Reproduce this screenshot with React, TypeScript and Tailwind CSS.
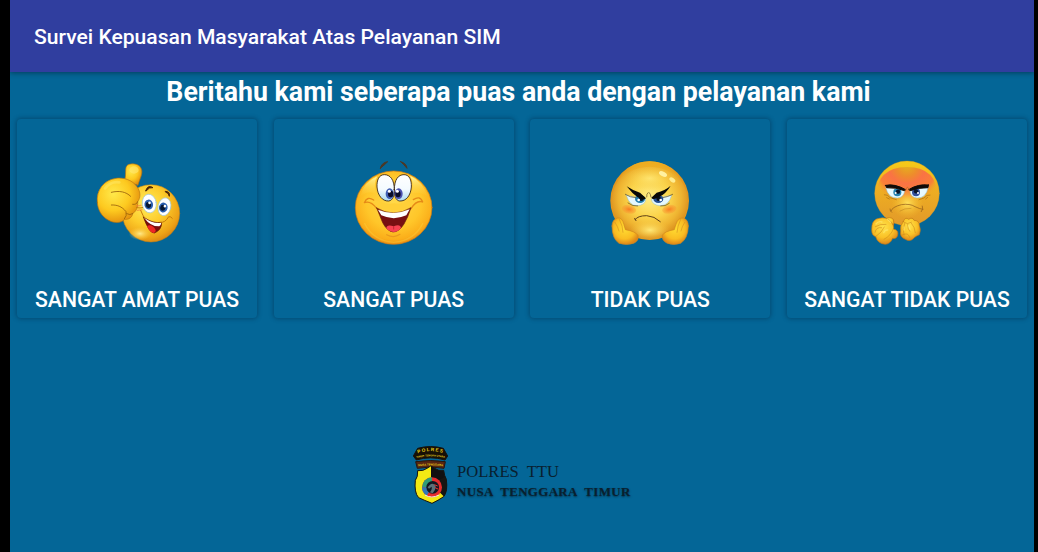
import React from 'react';

function ThumbFace() {
  return (
    <svg className="h-[95px] w-[100px]" viewBox="-9 0 300 285" fill="none" strokeLinecap="round">
      <defs>
        <radialGradient id="a1" cx="42%" cy="35%" r="68%">
          <stop offset="0" stopColor="#ffed5c" />
          <stop offset=".5" stopColor="#fdcb2a" />
          <stop offset=".85" stopColor="#eda216" />
          <stop offset="1" stopColor="#d98512" />
        </radialGradient>
        <radialGradient id="a2" cx="38%" cy="35%" r="70%">
          <stop offset="0" stopColor="#ffe94a" />
          <stop offset=".55" stopColor="#fdc91f" />
          <stop offset="1" stopColor="#e28b0c" />
        </radialGradient>
        <radialGradient id="a3" cx="50%" cy="50%" r="50%">
          <stop offset="0" stopColor="#ffe98a" />
          <stop offset="1" stopColor="#ffd040" stopOpacity="0" />
        </radialGradient>
      </defs>
      <circle cx="183" cy="175" r="86" fill="url(#a1)" stroke="#c98010" strokeWidth="1.5" />
      <ellipse cx="150" cy="236" rx="34" ry="20" fill="url(#a3)" />
      <path d="M103 78C110 62 104 42 110 33C116 24 142 24 151 36C162 52 151 66 144 90Z" fill="url(#a2)" stroke="#b87410" strokeWidth="2" />
      <ellipse cx="132" cy="45" rx="14" ry="11" fill="#ffe66a" opacity=".7" />
      <path d="M22 142C18 105 42 75 78 70C100 66 128 76 140 94C154 112 151 130 143 140C145 156 138 169 128 176C126 188 116 194 104 193C96 204 74 206 56 196C34 184 23 164 22 142Z" fill="url(#a2)" stroke="#b87410" strokeWidth="2" />
      <path d="M64 112C88 106 108 110 122 124M64 150C80 149 96 154 108 170Q112 182 103 192M128 148Q140 150 143 140M110 176Q120 182 128 176" stroke="#99600c" strokeWidth="2.5" />
      <path d="M45 100Q62 78 88 82" stroke="#fff07a" strokeWidth="8" opacity=".4" />
      <g transform="rotate(-8 175 147)">
        <ellipse cx="178" cy="146" rx="21" ry="28" fill="#fff" stroke="#9cc4d6" strokeWidth="2" />
        <ellipse cx="176" cy="149" rx="13" ry="15" fill="#2a5fb0" />
        <ellipse cx="175" cy="150" rx="8" ry="9" fill="#071733" />
        <circle cx="179" cy="144" r="4" fill="#fff" />
      </g>
      <g transform="rotate(12 222 157)">
        <ellipse cx="223" cy="155" rx="19" ry="27" fill="#fff" stroke="#9cc4d6" strokeWidth="2" />
        <ellipse cx="220" cy="158" rx="13" ry="15" fill="#2a5fb0" />
        <ellipse cx="219" cy="159" rx="8" ry="9" fill="#071733" />
        <circle cx="224" cy="153" r="4" fill="#fff" />
      </g>
      <path d="M167 107Q174 88 189 98Q178 95 169 107ZM227 109Q241 110 238 124Q237 114 227 111Z" fill="#4a2505" stroke="#4a2505" strokeWidth="3" />
      <path d="M160 186Q189 207 215 202Q215 226 193 234Q178 236 160 186Z" fill="#7b0d0d" stroke="#5b1505" strokeWidth="2" />
      <path d="M162 188Q189 207 214 203Q213 210 208 214Q182 215 162 188Z" fill="#fff" />
      <path d="M171 213Q186 206 197 225Q198 232 190 234Q179 232 171 213Z" fill="#ed2724" />
      <path d="M140 158Q151 160 158 158M152 166Q158 182 166 192M210 202Q225 205 236 185Q243 184 247 190" stroke="#c67b0a" strokeWidth="3" />
      <path d="M140 153L153 151M142 166L156 164" stroke="#f07840" strokeWidth="4" opacity=".6" />
    </svg>
  );
}

function HappyFace() {
  return (
    <svg className="h-[95px] w-[100px]" viewBox="-4 0 300 285" fill="none" strokeLinecap="round">
      <defs>
        <radialGradient id="b1" cx="50%" cy="42%" r="60%">
          <stop offset="0" stopColor="#ffd94a" />
          <stop offset=".6" stopColor="#ffc629" />
          <stop offset=".86" stopColor="#fbae1a" />
          <stop offset="1" stopColor="#e88710" />
        </radialGradient>
        <linearGradient id="b2" x1="0" x2="0" y1="0" y2="1">
          <stop offset="0" stopColor="#fff7a0" />
          <stop offset="1" stopColor="#ffd43c" stopOpacity="0" />
        </linearGradient>
        <linearGradient id="b3" x1="0" x2="0" y1="0" y2="1">
          <stop offset="0" stopColor="#fff" />
          <stop offset=".55" stopColor="#f4fbff" />
          <stop offset="1" stopColor="#a9d9ef" />
        </linearGradient>
      </defs>
      <ellipse cx="145" cy="158" rx="115" ry="110" fill="url(#b1)" stroke="#d87b0d" strokeWidth="2" />
      <path d="M45 124Q55 80 96 64Q84 84 92 116Q72 104 45 124ZM194 62Q235 80 247 126Q222 108 199 116Q207 84 194 62Z" fill="url(#b2)" />
      <path d="M105 40Q108 23 127 20Q118 29 105 40ZM166 20Q184 25 185 40Q176 29 166 20Z" fill="#4b3826" stroke="#4b3826" strokeWidth="3" />
      <path d="M147 104C147 73 134 59 117 59C101 59 94 75 95 96C97 121 111 139 130 138C142 136 147 124 147 104Z" fill="url(#b3)" stroke="#2e1a10" strokeWidth="2.5" />
      <path d="M147 104C147 73 159 59 176 59C192 59 199 75 198 96C196 121 183 139 163 138C151 136 147 124 147 104Z" fill="url(#b3)" stroke="#2e1a10" strokeWidth="2.5" />
      <ellipse cx="133" cy="116" rx="12" ry="16" fill="#3f5fb4" />
      <ellipse cx="160" cy="116" rx="12" ry="16" fill="#4a50b0" />
      <ellipse cx="136" cy="117" rx="8" ry="10" fill="#090c29" />
      <ellipse cx="158" cy="117" rx="8" ry="10" fill="#090c29" />
      <circle cx="132" cy="109" r="4.5" fill="#fff" />
      <circle cx="156" cy="109" r="4.5" fill="#fff" />
      <path d="M61 139Q72 120 91 134Q119 150 147 145Q176 150 203 133Q224 119 232 139Q218 132 204 151Q190 166 146 165Q102 165 89 151Q75 132 61 139Z" fill="#ffcf38" />
      <path d="M57 143Q66 122 85 135M57 143Q75 136 94 160M232 141Q224 120 204 134M232 141Q214 134 197 161" stroke="#e68a17" strokeWidth="4" />
      <path d="M94 159Q145 190 197 158Q188 187 176 207Q161 231 143 231Q125 228 112 203Q104 183 94 159Z" fill="#781012" stroke="#6c220b" strokeWidth="2" />
      <path d="M98 164Q145 184 193 163L183 181Q145 198 108 181Z" fill="#fff" />
      <path d="M123 220Q124 207 145 214Q165 206 167 219Q157 231 144 231Q131 230 123 220Z" fill="#f64251" />
      <path d="M145 215V222" stroke="#ae1726" strokeWidth="2" />
      <path d="M124 239Q145 251 164 238" stroke="#e99a1c" strokeWidth="3.5" />
      <path d="M58 206Q84 258 145 262Q206 258 232 206" stroke="#fddb49" strokeWidth="4" opacity=".3" />
    </svg>
  );
}

function AnnoyedFace() {
  return (
    <svg className="h-[95px] w-[100px]" viewBox="-1 0 300 285" fill="none" strokeLinecap="round">
      <defs>
        <radialGradient id="c1" cx="50%" cy="45%" r="52%">
          <stop offset="0" stopColor="#ffed86" />
          <stop offset=".5" stopColor="#fbd44b" />
          <stop offset=".8" stopColor="#efb431" />
          <stop offset="1" stopColor="#dd9420" />
        </radialGradient>
        <radialGradient id="c2" cx="48%" cy="40%" r="60%">
          <stop offset="0" stopColor="#ffdc32" />
          <stop offset=".65" stopColor="#fabd22" />
          <stop offset="1" stopColor="#df8618" />
        </radialGradient>
        <radialGradient id="c3">
          <stop offset="0" stopColor="#f87c22" />
          <stop offset="1" stopColor="#f99a32" stopOpacity=".35" />
        </radialGradient>
        <radialGradient id="c5">
          <stop offset="0" stopColor="#ffe878" />
          <stop offset="1" stopColor="#f6c83e" stopOpacity="0" />
        </radialGradient>
        <linearGradient id="c4" x1="0" x2="0" y1="0" y2="1">
          <stop offset="0" stopColor="#f0b020" />
          <stop offset="1" stopColor="#e9a021" stopOpacity="0" />
        </linearGradient>
      </defs>
      <circle cx="148" cy="137" r="118" fill="#e2961f" />
      <ellipse cx="148" cy="139" rx="114" ry="113" fill="url(#c1)" />
      <path d="M40 95Q78 19 148 19Q219 20 257 95Q216 36 148 35Q79 36 40 95Z" fill="url(#c4)" />
      <ellipse cx="148" cy="70" rx="75" ry="36" fill="url(#c5)" opacity=".8" />
      <ellipse cx="188" cy="57" rx="13" ry="7" transform="rotate(29 188 57)" fill="#fff1a0" />
      <ellipse cx="216" cy="75" rx="10" ry="6" transform="rotate(35 216 75)" fill="#ffed90" />
      <ellipse cx="149" cy="225" rx="60" ry="31" fill="url(#c5)" />
      <ellipse cx="86" cy="163" rx="22" ry="13" transform="rotate(12 86 163)" fill="url(#c3)" />
      <ellipse cx="207" cy="163" rx="22" ry="13" transform="rotate(-12 207 163)" fill="url(#c3)" />
      <path d="M77 120Q93 125 136 132Q135 151 110 152Q88 153 79 123ZM214 121Q192 126 153 132Q156 151 180 152Q205 152 213 123Z" fill="#e5f8ff" stroke="#8fbccb" strokeWidth="1.5" />
      <ellipse cx="119" cy="132" rx="15" ry="12" fill="#247dac" />
      <ellipse cx="174" cy="132" rx="15" ry="12" fill="#254e91" />
      <circle cx="123" cy="131" r="7" fill="#07111d" />
      <circle cx="175" cy="131" r="7" fill="#07111d" />
      <circle cx="115" cy="135" r="4" fill="#fff" />
      <circle cx="181" cy="135" r="4" fill="#fff" />
      <path d="M79 94Q96 106 119 113L137 130Q131 138 112 127Q95 115 79 94ZM211 92Q194 107 169 113L153 128Q157 137 175 127Q198 115 211 92Z" fill="#090806" />
      <path d="M75 118Q90 128 106 128M217 118Q202 126 188 128M139 126Q138 117 143 113M152 126Q151 117 147 113M83 144Q96 155 112 153M207 145Q196 155 181 153" stroke="#59441d" strokeWidth="2" />
      <path d="M104 194Q112 182 139 182Q162 183 180 200M103 190L107 197" stroke="#604016" strokeWidth="3" />
      <g fill="url(#c2)" stroke="#d18a1c" strokeWidth="2">
        <path d="M35 213Q35 194 52 189Q66 187 71 209L75 224Q105 229 113 241Q117 257 100 265Q79 272 56 265Q35 251 35 213Z" />
        <path d="M264 213Q264 194 249 189Q233 187 226 210L222 224Q192 229 186 241Q184 257 201 265Q219 272 241 265Q263 251 264 213Z" />
      </g>
      <path d="M44 202Q53 216 56 228M57 193Q68 214 68 232M253 202Q244 216 242 228M241 193Q231 214 230 232" stroke="#d8941f" strokeWidth="2" />
    </svg>
  );
}

function AngryFace() {
  return (
    <svg className="h-[95px] w-[100px]" viewBox="-9 0 300 285" fill="none" strokeLinecap="round">
      <defs>
        <linearGradient id="d1" x1="0" x2="0" y1="0" y2="1">
          <stop offset="0" stopColor="#f6cb18" />
          <stop offset=".4" stopColor="#efb021" />
          <stop offset="1" stopColor="#e2992a" />
        </linearGradient>
        <radialGradient id="d2" gradientUnits="userSpaceOnUse" cx="141" cy="30" r="112">
          <stop offset="0" stopColor="#e3b41c" />
          <stop offset=".3" stopColor="#ee8c2c" />
          <stop offset=".5" stopColor="#fa7344" />
          <stop offset=".8" stopColor="#f98038" />
          <stop offset="1" stopColor="#f0a52a" stopOpacity="0" />
        </radialGradient>
        <radialGradient id="d3" cx="45%" cy="35%" r="65%">
          <stop offset="0" stopColor="#ffe34c" />
          <stop offset=".6" stopColor="#fac126" />
          <stop offset="1" stopColor="#dc861a" />
        </radialGradient>
        <radialGradient id="d4">
          <stop offset="0" stopColor="#ffe05a" />
          <stop offset="1" stopColor="#f4bd2b" stopOpacity="0" />
        </radialGradient>
      </defs>
      <circle cx="141" cy="115" r="97" fill="url(#d1)" stroke="#dc9823" strokeWidth="1" />
      <path d="M50 125Q48 38 141 36Q234 38 231 125Q208 144 141 144Q82 144 50 125Z" fill="url(#d2)" />
      <ellipse cx="142" cy="145" rx="48" ry="45" fill="url(#d4)" />
      <path d="M78 99Q112 100 134 109Q130 128 112 129Q84 129 78 99ZM204 98Q174 99 150 109Q152 127 171 129Q199 129 204 98Z" fill="#e7faff" stroke="#8fc3cf" strokeWidth="1.5" />
      <circle cx="112" cy="112" r="12" fill="#2683b2" />
      <circle cx="168" cy="112" r="12" fill="#304e9b" />
      <circle cx="114" cy="110" r="6.5" fill="#07152a" />
      <circle cx="168" cy="109" r="6.5" fill="#07152a" />
      <circle cx="107" cy="114" r="3" fill="#fff" />
      <circle cx="174" cy="114" r="3" fill="#fff" />
      <path d="M77 91L80 98Q106 96 134 107L137 104Q104 85 77 91ZM205 90L204 98Q176 97 150 107L146 104Q174 86 205 90Z" fill="#100b08" stroke="#100b08" strokeWidth="3" strokeLinejoin="round" />
      <path d="M135 107Q140 96 142 97Q144 95 149 107M73 119Q83 118 90 128L109 134M210 120Q200 118 192 129L177 134M80 128L88 132M203 127L197 132" stroke="#9d6418" strokeWidth="1.8" />
      <path d="M93 168Q96 156 124 149Q150 145 165 155Q179 162 189 163M90 162Q90 169 95 172M187 153Q191 162 184 170" stroke="#96601a" strokeWidth="2.2" />
      <path d="M120 168Q133 159 153 160" stroke="#bd821f" strokeWidth="1.6" />
      <g fill="url(#d3)" stroke="#be7717" strokeWidth="2">
        <path d="M77 191Q89 183 100 193Q105 206 98 215Q84 217 77 205Z" />
        <path d="M36 211Q39 193 57 190Q78 185 91 198Q104 214 100 222Q117 225 113 241Q109 253 98 250Q91 267 76 268Q53 266 47 245Q35 242 35 225Z" />
        <path d="M130 199Q136 184 146 193Q158 185 162 196Q178 196 178 211Q184 226 178 239Q169 243 164 247Q151 263 136 253Q118 246 122 228Q119 212 130 199Z" />
      </g>
      <path d="M46 215Q61 206 78 208M45 232Q48 215 65 218M48 244Q66 232 73 216M72 253Q94 241 100 222M134 205Q126 225 132 240M143 208Q143 223 149 229M154 204Q165 217 166 233M127 240Q145 230 149 247M132 202Q141 210 154 202" stroke="#cf8b1c" strokeWidth="1.8" />
      <path d="M48 207Q55 197 66 201M71 233Q75 224 83 225M132 216L132 225M146 212L150 223M82 193L92 202" stroke="#ffec77" strokeWidth="4" opacity=".6" />
    </svg>
  );
}

function Emblem() {
  return (
    <svg className="h-[70px] w-[60px] shrink-0" viewBox="0 0 180 210" fill="none">
      <defs>
        <path id="arc1" d="M30 43Q77 24 124 43" />
        <path id="arc2" d="M34 54Q77 44 120 54" />
        <path id="arc3" d="M36 79Q77 74 118 79" />
        <clipPath id="shield">
          <path d="M38 92Q55 94 66 85L77 78L89 85Q101 94 116 91Q118 108 124 118Q129 154 116 170Q100 181 81 190Q58 181 41 173Q27 158 31 121Q39 111 38 92Z" />
        </clipPath>
      </defs>
      <path d="M25 48L38 25Q77 14 115 25L128 48Q124 54 120 60Q77 47 34 60Z" fill="#171006" stroke="#16120b" strokeWidth="3" />
      <path d="M32 65Q77 58 121 65L117 85Q77 77 37 85Z" fill="#5a2611" stroke="#26170e" strokeWidth="3" />
      <g fill="#e8d21c" fontFamily="Liberation Sans, sans-serif" fontWeight="700" textAnchor="middle">
        <text fontSize="14" letterSpacing="3.5"><textPath href="#arc1" startOffset="50%">POLRES</textPath></text>
        <text fontSize="7.5"><textPath href="#arc2" startOffset="50%">TIMOR TENGAH UTARA</textPath></text>
        <text fontSize="8.5"><textPath href="#arc3" startOffset="50%">NUSA TENGGARA</textPath></text>
      </g>
      <g clipPath="url(#shield)">
        <path d="M25 75H130V195H25Z" fill="#111" />
        <path d="M25 75H78V132L45 178L25 165Z" fill="#f3e914" />
        <path d="M78 132L125 108V185H78Z" fill="#171612" />
        <path d="M25 195V168L58 156L81 168L103 156L119 172L80 195Z" fill="#f3e914" />
      </g>
      <path d="M38 92Q55 94 66 85L77 78L89 85Q101 94 116 91Q118 108 124 118Q129 154 116 170Q100 181 81 190Q58 181 41 173Q27 158 31 121Q39 111 38 92Z" stroke="#171610" strokeWidth="3" />
      <circle cx="81" cy="142" r="30" fill="#e52c2d" />
      <path d="M81 112A30 30 0 0 0 51 142H81Z" fill="#2f9c78" />
      <path d="M51 142A30 30 0 0 0 65 167L81 142Z" fill="#3177b5" />
      <circle cx="83" cy="142" r="19" fill="#111821" />
      <path d="M74 157Q82 150 80 140L72 146L68 142L75 134Q84 127 92 138Q92 150 83 160Z" fill="#5b7079" />
      <path d="M88 134L98 138M90 143L99 147" stroke="#ed332f" strokeWidth="3" />
      <path d="M60 165Q80 177 102 165" stroke="#f4efe8" strokeWidth="3" />
    </svg>
  );
}

const choices = [
  { label: 'SANGAT AMAT PUAS', Face: ThumbFace },
  { label: 'SANGAT PUAS', Face: HappyFace },
  { label: 'TIDAK PUAS', Face: AnnoyedFace },
  { label: 'SANGAT TIDAK PUAS', Face: AngryFace },
];

export default function App() {
  return (
    <div className="h-[552px] w-[1038px] overflow-hidden bg-black pr-1 pl-2.5 font-['Roboto',sans-serif] text-white">
      <div className="flex h-full flex-col bg-[#046697]">
        <header className="z-10 flex h-[72px] shrink-0 items-center bg-[#303e9f] pt-0.5 pl-6 shadow-[0_1px_5px_rgba(0,0,0,0.4)]">
          <h1 className="text-[21.1px] font-medium">Survei Kepuasan Masyarakat Atas Pelayanan SIM</h1>
        </header>
        <h2 className="h-[47px] shrink-0 pr-[7px] text-center text-[26.72px] leading-[40px] font-bold">
          Beritahu kami seberapa puas anda dengan pelayanan kami
        </h2>
        <main className="grid shrink-0 grid-cols-4 gap-[16.6px] px-[7px]">
          {choices.map(({ label, Face }) => (
            <button
              key={label}
              className="flex h-[199px] flex-col items-center rounded-[4px] bg-[#046697] pt-9 shadow-[0_0_4px_1px_rgba(0,35,65,0.4)]"
            >
              <Face />
              <span className="mt-[35px] text-[21.2px] leading-[30px] font-medium whitespace-nowrap">{label}</span>
            </button>
          ))}
        </main>
        <footer className="mt-[122px] flex h-[70px] pl-[395px] font-['Liberation_Serif',serif] text-[#09202f]">
          <Emblem />
          <div className="-ml-[8px] pt-[21px]">
            <p className="text-[16.6px] leading-[22px] [word-spacing:4px]">POLRES TTU</p>
            <p className="text-[13px] leading-[18px] font-bold tracking-[0.3px] [word-spacing:4px] [text-shadow:0_1px_2px_rgba(0,0,0,0.5)]">
              NUSA TENGGARA TIMUR
            </p>
          </div>
        </footer>
      </div>
    </div>
  );
}
